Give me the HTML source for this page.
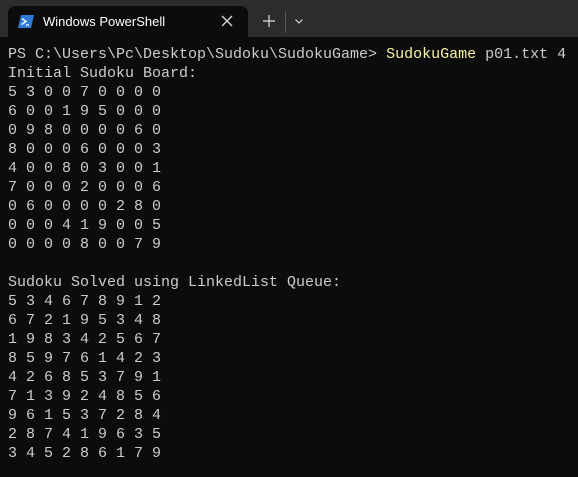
<!DOCTYPE html>
<html><head><style>
body{margin:0;width:578px;height:477px;background:#0c0c0c;overflow:hidden;font-family:"Liberation Sans",sans-serif}
.bar{position:absolute;left:0;top:0;width:578px;height:37px;background:#2c2c2c}
.tab{position:absolute;left:8px;top:6px;width:240px;height:31px;background:#0c0c0c;border-radius:7px 7px 0 0}
.tab .t{position:absolute;left:35px;top:8px;color:#fff;font-size:13px}
.x{position:absolute;left:219px;top:5px;color:#ddd;font-size:17px}
.plus{position:absolute;left:262px;top:10px;color:#ddd;font-size:18px;line-height:18px}
.sep{position:absolute;left:285px;top:11px;width:1px;height:22px;background:#555}
pre{position:absolute;left:8px;top:45px;margin:0;font-family:"Liberation Mono",monospace;font-size:15px;line-height:19px;color:#cccccc}
.y{color:#f9f1a5}
</style></head><body>
<div class="bar"></div>
<div class="tab">
<svg style="position:absolute;left:10px;top:9px" width="16" height="13" viewBox="0 0 16 13"><path d="M3 0H16L13 13H0Z" fill="#2d7bd6"/><path d="M4 3.5L8 6.5L3.5 9.5" stroke="#fff" stroke-width="1.4" fill="none"/><path d="M8 10H11" stroke="#fff" stroke-width="1.3"/></svg>
<span class="t">Windows PowerShell</span>
<svg style="position:absolute;left:213px;top:9px" width="12" height="12" viewBox="0 0 12 12"><path d="M1 1L11 11M11 1L1 11" stroke="#ddd" stroke-width="1.3"/></svg>
</div>
<svg style="position:absolute;left:263px;top:15px" width="12" height="12" viewBox="0 0 12 12"><path d="M6 0V12M0 6H12" stroke="#ddd" stroke-width="1.2"/></svg>
<div class="sep"></div>
<svg style="position:absolute;left:295px;top:19px" width="8" height="5" viewBox="0 0 8 5"><path d="M0.5 0.5L4 4L7.5 0.5" stroke="#ddd" stroke-width="1.1" fill="none"/></svg>
<pre>PS C:\Users\Pc\Desktop\Sudoku\SudokuGame&gt; <span class="y">SudokuGame</span> p01.txt 4
Initial Sudoku Board:
5 3 0 0 7 0 0 0 0
6 0 0 1 9 5 0 0 0
0 9 8 0 0 0 0 6 0
8 0 0 0 6 0 0 0 3
4 0 0 8 0 3 0 0 1
7 0 0 0 2 0 0 0 6
0 6 0 0 0 0 2 8 0
0 0 0 4 1 9 0 0 5
0 0 0 0 8 0 0 7 9

Sudoku Solved using LinkedList Queue:
5 3 4 6 7 8 9 1 2
6 7 2 1 9 5 3 4 8
1 9 8 3 4 2 5 6 7
8 5 9 7 6 1 4 2 3
4 2 6 8 5 3 7 9 1
7 1 3 9 2 4 8 5 6
9 6 1 5 3 7 2 8 4
2 8 7 4 1 9 6 3 5
3 4 5 2 8 6 1 7 9</pre>
</body></html>
